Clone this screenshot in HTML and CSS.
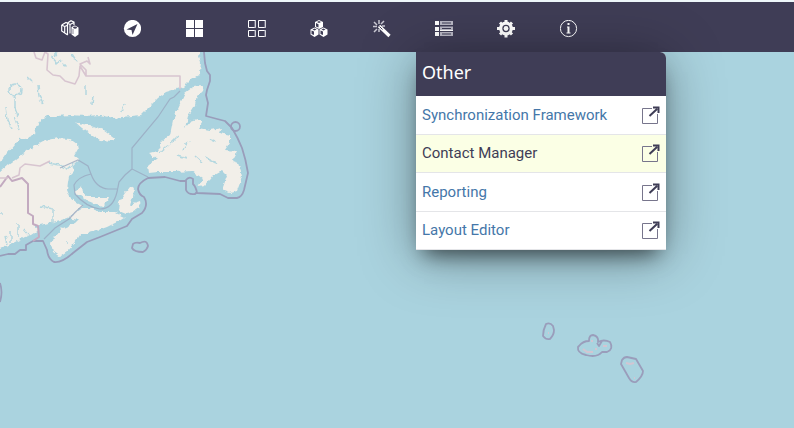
FILE: index.html
```html
<!DOCTYPE html>
<html lang="en">
<head>
<meta charset="utf-8">
<title>Map – Other</title>
<link rel="stylesheet" href="styles.css">
</head>
<body>
<header class="toolbar">
  <nav class="tools" aria-label="Tools">
    <button class="tool" type="button" aria-label="Buildings"><svg viewBox="0 0 18 18"><path d="M.7 5 5 2.500l2 1M.7 5v6l6 4M.7 5l3 1.500v6.500M3.700 6.500 7 5M6.500 3 10 .7l3 1.500v3M6.500 3v12M6.500 3 9 4.500v9M9 4.500l4-2" fill="none" stroke="#fff" stroke-width="1.200"/><path d="M10.500 7 14 5.500l3.500 2v7L14 17l-3.500-2.500z" fill="#fff"/><path d="M12 7.500l2-.8 2 1-2 .8zM12 9v5" fill="#3f3d56" stroke="#3f3d56" stroke-width=".6"/></svg></button>
    <button class="tool" type="button" aria-label="Navigate"><svg viewBox="0 0 18 18"><circle cx="9.500" cy="8.500" r="8.600" fill="#fff"/><path d="M14.500 4 9.500 15 8.500 10 3.500 9.500z" fill="#3f3d56"/></svg></button>
    <button class="tool" type="button" aria-label="Tiles"><svg viewBox="0 0 18 18"><path d="M0 0h8v8H0zM9 0h8v8H9zM0 9h8v8H0zM9 9h8v8H9z" fill="#fff"/></svg></button>
    <button class="tool" type="button" aria-label="Grid"><svg viewBox="0 0 18 18"><path d="M.5.500h7v7h-7zM10.500.500h7v7h-7zM.5 10.500h7v6h-7zM10.500 10.500h7v6h-7z" fill="none" stroke="#fff"/><path d="M7 1v7M17 1v7M7 10v7M17 10v7" stroke="#aaa9b8" fill="none"/></svg></button>
    <button class="tool" type="button" aria-label="Modules"><svg viewBox="0 0 18 18"><path d="M9 0l4 2v5l-4 2-4-2V2zM4.500 7.500l4 2v5L4.500 17 .5 14.500v-5zM13.500 7.500l4 2v5l-4 2.500-4-2.500v-5z" fill="#fff"/><path d="M6 3l2.500 1.200V7.500L6 6.500zM1.500 10.500 4 11.500v3.500L1.500 14zM10.500 10.500l2.500 1v3.500l-2.500-1zM7 2l2-1 2 1-2 1zM2.500 9.500l2-1 2 1-2 1zM11.500 9.500l2-1 2 1-2 1z" fill="#3f3d56"/></svg></button>
    <button class="tool" type="button" aria-label="Wizard"><svg viewBox="0 0 18 18"><path d="M6 0v4M1 2l3 3M0 6.500h4M11 1 8 4M1 12l3-3M6 9v3M9 6h3" stroke="#c9c8d2" stroke-width="1.500" fill="none"/><path d="M6 6l10.500 10" stroke="#fff" stroke-width="3.200"/><path d="M6.500 6.500l3 3" stroke="#3f3d56"/></svg></button>
    <button class="tool" type="button" aria-label="Other" aria-expanded="true"><svg viewBox="0 0 18 18"><path d="M0 1h4v4H0zM0 7h4v4H0zM0 12h4v4H0z" fill="#fff"/><path d="M5 1h13v4H5zM5 6.500h13v4H5zM5 12h13v4H5z" fill="#b9b8c5"/><path d="M7 2.500h9v1H7zM7 8h9v1H7zM7 13.500h9v1H7z" fill="#3f3d56"/><path d="M5 10.500h13" stroke="#fff"/></svg></button>
    <button class="tool" type="button" aria-label="Settings"><svg viewBox="0 0 18 18"><circle cx="9" cy="8.500" r="5.300" fill="none" stroke="#fff" stroke-width="3.200"/><path d="M9 0v3M9 14v3.500M0 8.500h3M15 8.500h3M3 2.500l2 2M13 12.500l2 2M3 14.500l2-2M13 4.500l2-2" stroke="#fff" stroke-width="3"/><circle cx="9" cy="8.500" r="2.400" fill="#fff"/></svg></button>
    <button class="tool" type="button" aria-label="Information"><svg viewBox="0 0 18 18"><circle cx="8.500" cy="8.500" r="8.100" fill="none" stroke="#fff"/><path d="M7.500 3h2v2h-2zM7 6.500h2.500V13h-2V7.500H7zM6.500 12.500h4v1h-4z" fill="#fff"/></svg></button>
  </nav>
</header>
<main class="stage">
  <svg class="map" viewBox="0 52 794 376" preserveAspectRatio="xMinYMin slice" role="img" aria-label="Map of the Atlantic coast">
    <defs>
      <filter id="coast" x="-5%" y="-5%" width="110%" height="110%" color-interpolation-filters="sRGB">
        <feTurbulence type="fractalNoise" baseFrequency="0.2" numOctaves="2" seed="4"/>
        <feDisplacementMap in="SourceGraphic" scale="5" xChannelSelector="R" yChannelSelector="G"/>
        <feGaussianBlur stdDeviation="0.6"/>
      </filter>
    </defs>
    <g class="land" filter="url(#coast)">
      <path d="M-8 40H203L199 56 201 62 200 74 190 80 183 87 176 89 166 92 158 98 152 104 146 110 141 115 132 116 122 117 114 118 100 115 85 116 70 115 56 116 47 116 40 121 36 128 35 134 28 137 20 139 14 145 7 153 0 163-8 170Z"/>
      <path d="M-8 177 0 172 8 165 18 158 30 149 45 141 57 138 70 139 77 144 78 149 74 156 79 160 72 167 74 171 69 176 68 182 67 190 70 197 77 203 83 206 75 213 67 218 53 222 40 225 35 225 38 231 32 235 25 237 13 243 0 249-8 252Z"/>
      <path d="M83 208 90 208 100 212 115 212 125 217 117 222 107 227 93 232 80 235 75 243 67 252 60 257 53 252 51 243 55 237 63 228 75 223 78 220 69 218 75 213Z"/>
      <path d="M131 186 134 188 133 197 130 205 139 202 140 207 133 212 125 214 118 211 119 202 125 193Z"/>
      <path d="M81 185 82 192 88 197 100 197 109 197 107 202 102 207 87 201 76 193Z"/>
      <path d="M75 122 82 124 90 125 103 130 114 138 113 141 100 140 90 134 82 128Z"/>
      <path d="M193 87 203 86 202 91 197 96 195 105 188 116 185 128 191 121 197 119 202 123 199 128 210 130 222 128 220 133 230 135 230 143 225 151 237 152 232 161 238 163 242 175 240 183 237 191 230 193 222 190 227 176 222 171 213 176 205 186 197 187 202 178 192 171 175 172 158 172 149 173 148 166 157 158 150 153 158 151 162 141 170 135 173 120 178 108 185 93Z"/>
    </g>
    <g class="water" filter="url(#coast)">
      <circle cx="15" cy="90" r="6"/>
      <path d="M15 96v11l3 10M14 116l5 14M6 107l2 13 4 9M38 84l1 12 4 8M28 77l4 4M51 56l6 7 4-3M62 64l4 2M72 54l5 8M57 52l-3 4M86 84v11M93 96l-1 8M124 104l-2 8M41 206l12 3v15M48 163l12 2 7 4 8-7M18 224v13M11 231v11M24 229l6 7M5 236l2 8M169 145l-9 7M178 136l-8 8M188 142l-5 7M195 156l7 6M210 139l5 2M206 158l10 5M66 243h1M177 155l10 3M0 214h2"/>
    </g>
    <g class="zone">
      <path d="M204 52 205 63 207 71 210 75 210 81 207 90 206 95 208 103 206 116Q217 119 225 121L232 128Q238 138 242 148 246 160 248 173L244 190Q242 197 237 198H228L220 194 197 193Q196 187 193 184V179Q189 176 186 180V190Q188 195 195 194L197 192M186 181 180 181 165 177 148 178Q138 183 138 189 139 195 144 197 149 205 142 213L132 219 127 226 100 237 87 242 73 253Q62 263 54 262 48 259 47 250L43 241H33L26 245V250H20L15 254H8L0 256"/>
      <circle cx="235.500" cy="126.500" r="4.500"/>
      <path d="M133 244Q135 242 140 243 147 239 148 246 147 250 143 252 134 252 132 248ZM0 283Q3 292 0 302"/>
      <path d="M546 324Q550 322 553 326L554 330Q554 335 550 339 546 340 543 336 543 330 546 324ZM579 346Q583 341 589 341 589 335 593 335 599 336 598 342 604 339 610 342 614 349 607 352L602 352Q597 358 586 355 577 353 578 347ZM597 343 599 346 602 341M622 360Q624 357 627 357L636 359 643 371Q643 376 636 382 632 383 629 378L621 364Z"/>
    </g>
    <g class="limit">
      <path d="M180 91 174 97 170 99 158 117 132 148V169L148 177M132 169 125 175 119 182 117 192Q113 209 100 209 86 207 75 194L74 185Q78 177 91 174L88 166 78 160 60 168M91 174Q96 188 108 189H118M83 205Q75 212 69 219L55 228 44 239"/>
    </g>
    <g class="border">
      <path d="M34 52 36 58 42 60 45 52 48 54 47 70 53 75 60 76 65 81 75 84 79 76 80 66 86 76 86 70 80 64 87 61 90 64 88 57M86 76H180V89" />
      <path class="border-strong" d="M0 187 8 176 12 181 22 178 28 184V213L33 216V224L38 226 39 237 33 241"/>
      <path d="M0 178H8M12 178 19 175 20 168 25 164 40 166 50 161"/>
    </g>
    <path class="islands" d="M548 333h1M583 349l4 3 6 0M591 341h2M603 346h4M595 349h2M626 363l4 1 4-1M634 378h1"/>
  </svg>
  <section class="menu" aria-labelledby="menu-title">
    <h2 class="menu-title" id="menu-title">Other</h2>
    <ul class="menu-list">
      <li class="item"><a class="link" href="#sync">Synchronization Framework<svg class="open" viewBox="0 0 18 18" aria-hidden="true"><path d="M10 2.500H.5v15h15V8"/><path class="arrow" d="M7.500 10 15 3M11 1.500h5.500V7"/></svg></a></li>
      <li class="item item-active"><a class="link" href="#contacts">Contact Manager<svg class="open" viewBox="0 0 18 18" aria-hidden="true"><path d="M10 2.500H.5v15h15V8"/><path class="arrow" d="M7.500 10 15 3M11 1.500h5.500V7"/></svg></a></li>
      <li class="item"><a class="link" href="#reporting">Reporting<svg class="open" viewBox="0 0 18 18" aria-hidden="true"><path d="M10 2.500H.5v15h15V8"/><path class="arrow" d="M7.500 10 15 3M11 1.500h5.500V7"/></svg></a></li>
      <li class="item"><a class="link" href="#layout">Layout Editor<svg class="open" viewBox="0 0 18 18" aria-hidden="true"><path d="M10 2.500H.5v15h15V8"/><path class="arrow" d="M7.500 10 15 3M11 1.500h5.500V7"/></svg></a></li>
    </ul>
  </section>
</main>
</body>
</html>
```
FILE: styles.css
```css
* { box-sizing: border-box; }

body {
  margin: 0;
  min-height: 100vh;
  display: flex;
  flex-direction: column;
  overflow: hidden;
  background: #aad3df;
  font-family: Roboto, "Liberation Sans", sans-serif;
  font-size: 15px;
}

.toolbar {
  border-top: 2px solid #eef7fa;
  background: #3f3d56;
  padding: 0 39px;
}

.tools {
  display: flex;
  max-width: 561px;
}

.tool {
  flex: 1;
  height: 50px;
  padding: 4px 0 0;
  border: 0;
  background: none;
  display: flex;
  align-items: center;
  justify-content: center;
}

.tool svg {
  width: 18px;
  height: 18px;
}

.stage {
  flex: 1;
  position: relative;
}

.map {
  position: absolute;
  inset: 0;
  width: 100%;
  height: 100%;
}

.land { fill: #f2efe9; }
.water { fill: none; stroke: #b5d8e0; stroke-width: 1.5; }
.zone { fill: none; stroke: #9690b2; stroke-width: 1.8; opacity: .8; stroke-linejoin: round; }
.limit { fill: none; stroke: #9aa9c0; stroke-width: 1.2; opacity: .8; }
.border { fill: none; stroke: #d8c5d0; stroke-width: 1.6; stroke-linejoin: round; }
.border-strong { stroke: #c3aac0; stroke-width: 2; }
.islands { fill: none; stroke: #d3c5d2; stroke-width: 2; }

.menu {
  position: absolute;
  top: 0;
  left: 416px;
  width: 250px;
  border-radius: 0 6px 0 0;
  background: #fff;
  box-shadow: 0 12px 20px -8px rgba(0, 0, 0, .6), 0 6px 56px rgba(0, 0, 0, .35);
}

.menu-title {
  margin: 0;
  padding: 0 6px 4px;
  border-radius: 0 6px 0 0;
  background: #3f3d56;
  color: #fff;
  font: 400 18px/40px "Noto Sans", sans-serif;
}

.menu-list {
  margin: 0;
  padding: 0;
  list-style: none;
  display: grid;
  grid-template-rows: repeat(4, 1fr);
  height: 154px;
}

.item {
  display: flex;
  border-bottom: 1px solid #e4e5e8;
}

.item-active { background: #fbffe5; }

.link {
  flex: 1;
  display: flex;
  align-items: center;
  justify-content: space-between;
  padding: 0 6px;
  color: #4577a9;
  text-decoration: none;
}

.item-active .link { color: #3f3d56; }

.open {
  width: 18px;
  height: 18px;
  fill: none;
  stroke: #77758c;
}

.arrow {
  stroke: #3f3d56;
  stroke-width: 2;
}
```
